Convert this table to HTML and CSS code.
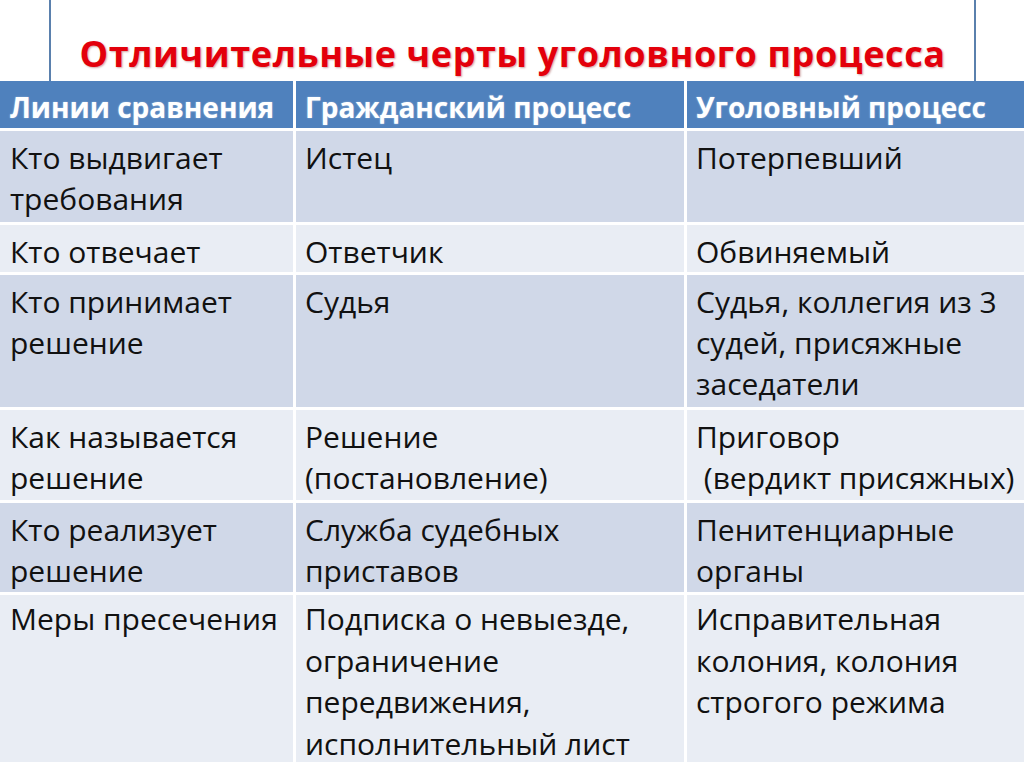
FILE: index.html
```html
<!DOCTYPE html>
<html lang="ru">
<head>
<meta charset="utf-8">
<title>Отличительные черты уголовного процесса</title>
<link rel="stylesheet" href="styles.css">
</head>
<body>
<div class="slide">
  <header class="title-area">
    <h1 class="title">Отличительные черты уголовного процесса</h1>
  </header>
  <div class="table">
    <div class="cell head">Линии сравнения</div>
    <div class="cell head">Гражданский процесс</div>
    <div class="cell head">Уголовный процесс</div>

    <div class="cell dark r1">Кто выдвигает<br>требования</div>
    <div class="cell dark r1">Истец</div>
    <div class="cell dark r1">Потерпевший</div>

    <div class="cell light r2">Кто отвечает</div>
    <div class="cell light r2">Ответчик</div>
    <div class="cell light r2">Обвиняемый</div>

    <div class="cell dark r3">Кто принимает<br>решение</div>
    <div class="cell dark r3">Судья</div>
    <div class="cell dark r3">Судья, коллегия из 3<br>судей, присяжные<br>заседатели</div>

    <div class="cell light r4">Как называется<br>решение</div>
    <div class="cell light r4">Решение<br>(постановление)</div>
    <div class="cell light r4">Приговор<br>&nbsp;(вердикт присяжных)</div>

    <div class="cell dark r5">Кто реализует<br>решение</div>
    <div class="cell dark r5">Служба судебных<br>приставов</div>
    <div class="cell dark r5">Пенитенциарные<br>органы</div>

    <div class="cell light r6">Меры пресечения</div>
    <div class="cell light r6">Подписка о невыезде,<br>ограничение<br>передвижения,<br>исполнительный лист</div>
    <div class="cell light r6">Исправительная<br>колония, колония<br>строгого режима</div>
  </div>
</div>
</body>
</html>
```

FILE: styles.css
```css
html, body {
  margin: 0;
  padding: 0;
  background: #ffffff;
}

.slide {
  width: 1024px;
  height: 767px;
  overflow: hidden;
  font-family: "Open Sans", "Noto Sans", sans-serif;
}

.title-area {
  height: 81px;
  margin: 0 48px 0 49px;
  border-left: 2px solid #5a80ad;
  border-right: 2px solid #5a80ad;
  display: flex;
  align-items: flex-end;
  justify-content: center;
}

.title {
  margin: 0 0 5px 0;
  font-size: 36px;
  font-weight: 700;
  letter-spacing: 0.6px;
  line-height: 44px;
  color: #e3000b;
  text-shadow: 1px 1px 2px rgba(120, 0, 0, 0.35);
  white-space: nowrap;
}

.table {
  display: grid;
  grid-template-columns: 293px 388px 1fr;
  column-gap: 3px;
  row-gap: 3px;
}

.cell {
  padding: 6px 0 0 9px;
  font-size: 30px;
  font-stretch: 98%;
  line-height: 41px;
  color: #111111;
  white-space: nowrap;
}

.cell:nth-child(3n+1) {
  padding-left: 10px;
}

.head {
  height: 47px;
  padding-top: 4px;
  box-sizing: border-box;
  font-size: 28px;
  line-height: 44px;
  background: #4f81bd;
  color: #ffffff;
  font-weight: 700;
  text-shadow: 0 0 2px rgba(255, 255, 255, 0.4);
}

.dark { background: #d0d8e8; }
.light { background: #e9edf4; }

.r1, .r2, .r3, .r4, .r5, .r6 { box-sizing: border-box; }
.r1 { height: 91px; }
.r2 { height: 47px; }
.r3 { height: 132px; }
.r4 { height: 90px; }
.r5 { height: 89px; }
.r6 { height: 167px; padding-top: 3px; line-height: 41.5px; }
```
